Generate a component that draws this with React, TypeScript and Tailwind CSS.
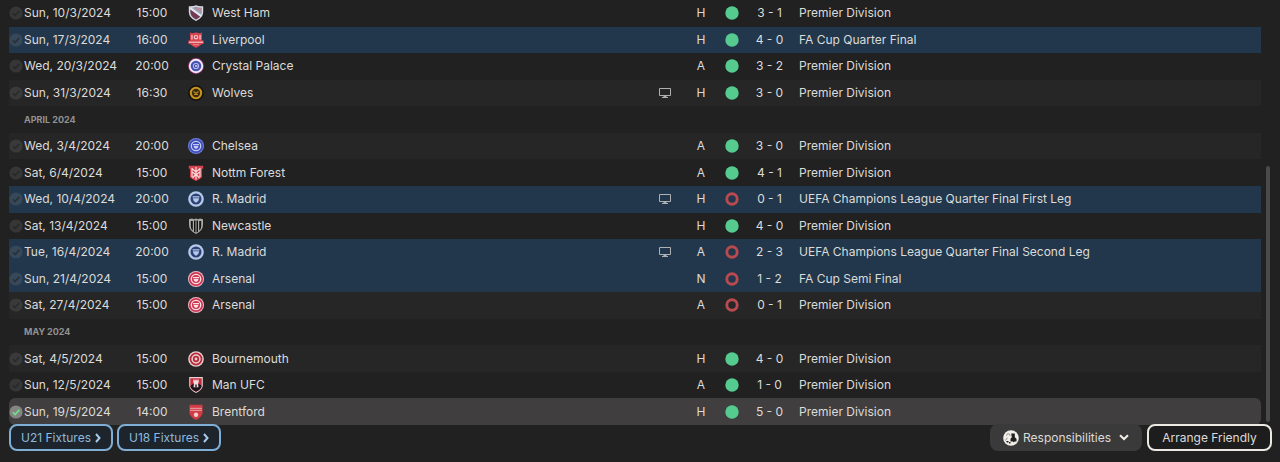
import type { ReactNode } from 'react';

type Result = 'win' | 'loss';

type Match = {
  date: string;
  time: string;
  team: string;
  tv?: boolean;
  venue: 'H' | 'A' | 'N';
  result: Result;
  score: string;
  competition: string;
  cup?: boolean;
  selected?: boolean;
};

type Row = Match | { month: string };

const LEAGUE = 'Premier Division';

const rows: Row[] = [
  { date: 'Sun, 10/3/2024', time: '15:00', team: 'West Ham', venue: 'H', result: 'win', score: '3 - 1', competition: LEAGUE },
  { date: 'Sun, 17/3/2024', time: '16:00', team: 'Liverpool', venue: 'H', result: 'win', score: '4 - 0', competition: 'FA Cup Quarter Final', cup: true },
  { date: 'Wed, 20/3/2024', time: '20:00', team: 'Crystal Palace', venue: 'A', result: 'win', score: '3 - 2', competition: LEAGUE },
  { date: 'Sun, 31/3/2024', time: '16:30', team: 'Wolves', tv: true, venue: 'H', result: 'win', score: '3 - 0', competition: LEAGUE },
  { month: 'APRIL 2024' },
  { date: 'Wed, 3/4/2024', time: '20:00', team: 'Chelsea', venue: 'A', result: 'win', score: '3 - 0', competition: LEAGUE },
  { date: 'Sat, 6/4/2024', time: '15:00', team: 'Nottm Forest', venue: 'A', result: 'win', score: '4 - 1', competition: LEAGUE },
  { date: 'Wed, 10/4/2024', time: '20:00', team: 'R. Madrid', tv: true, venue: 'H', result: 'loss', score: '0 - 1', competition: 'UEFA Champions League Quarter Final First Leg', cup: true },
  { date: 'Sat, 13/4/2024', time: '15:00', team: 'Newcastle', venue: 'H', result: 'win', score: '4 - 0', competition: LEAGUE },
  { date: 'Tue, 16/4/2024', time: '20:00', team: 'R. Madrid', tv: true, venue: 'A', result: 'loss', score: '2 - 3', competition: 'UEFA Champions League Quarter Final Second Leg', cup: true },
  { date: 'Sun, 21/4/2024', time: '15:00', team: 'Arsenal', venue: 'N', result: 'loss', score: '1 - 2', competition: 'FA Cup Semi Final', cup: true },
  { date: 'Sat, 27/4/2024', time: '15:00', team: 'Arsenal', venue: 'A', result: 'loss', score: '0 - 1', competition: LEAGUE },
  { month: 'MAY 2024' },
  { date: 'Sat, 4/5/2024', time: '15:00', team: 'Bournemouth', venue: 'H', result: 'win', score: '4 - 0', competition: LEAGUE },
  { date: 'Sun, 12/5/2024', time: '15:00', team: 'Man UFC', venue: 'A', result: 'win', score: '1 - 0', competition: LEAGUE },
  { date: 'Sun, 19/5/2024', time: '14:00', team: 'Brentford', venue: 'H', result: 'win', score: '5 - 0', competition: LEAGUE, selected: true },
];

const SHIELD = 'M.8 1.200 Q5 1.500 8 .3 Q11 1.500 15.200 1.200 V7 Q15 13 8 16 Q1 13 .8 7Z';

function RoundelCup({ base, rim, mark }: { base: string; rim: string; mark: string }) {
  return (
    <>
      <circle cx="8" cy="8" r="8" fill={rim} />
      <circle cx="8" cy="8" r="7.100" fill={base} />
      <circle cx="8" cy="8" r="4.700" fill="none" stroke={mark} strokeWidth="1.300" />
      <path d="M5 6h6v1.200H5z M5.500 7.900h5q-.3 2.400-2.500 3.200Q5.800 10.300 5.500 7.900z" fill={mark} />
    </>
  );
}

const crests: Record<string, ReactNode> = {
  'West Ham': (
    <>
      <path d={SHIELD} fill="#d6dbe6" />
      <path d="M2.300 2.800 Q6 3 8 1.800 Q10 3 13.700 2.800 V7 Q13.500 12 8 14.500 Q2.500 12 2.300 7Z" fill="#8fb0c9" />
      <path d="M2.300 4.500 12.300 11.500 Q11 13 8 14.500 Q2.500 12 2.300 7Z" fill="#74384f" />
      <path d="M5 2.700 13.500 8.500 13.700 2.800 Q10 3 8 1.800Z" fill="#b68f9f" />
      <path d="M2.500 3.200 13 11" stroke="#e8e9f0" strokeWidth="1.900" />
    </>
  ),
  Liverpool: (
    <>
      <path d="M2 .5 4 1.200 8 .5l4 .7 2-.7v8h1.700v3.500H14Q12 14 8 16 4 14 2 12H.3V8.500H2z" fill="#d9424f" />
      <path d="M3.300 3h1.300v4.500H3.300zM11.400 3h1.300v4.500h-1.300z" fill="#f3c9cb" />
      <circle cx="8" cy="5.200" r="1.700" fill="none" stroke="#f3c9cb" strokeWidth="1.200" />
      <path d="M1 10.200h14" stroke="#f3c9cb" strokeWidth="1.200" />
      <path d="M5 12.700h6" stroke="#e88b93" strokeWidth="1" />
    </>
  ),
  'Crystal Palace': (
    <>
      <circle cx="8" cy="8" r="7.900" fill="#a63a73" />
      <circle cx="8" cy="8" r="7.200" fill="#eeeafa" />
      <circle cx="8" cy="8" r="5.300" fill="#4652b4" />
      <circle cx="8" cy="8" r="3.100" fill="#b9bee9" />
      <circle cx="8" cy="8" r="2.100" fill="#3a469f" />
      <path d="M7 7.300h2.500v1.400H7z" fill="#e5e5f8" />
    </>
  ),
  Wolves: (
    <>
      <circle cx="8" cy="8" r="7.900" fill="#17130c" />
      <circle cx="8" cy="8" r="5.200" fill="#3a2c0c" stroke="#c8961f" strokeWidth="2" />
      <path d="M5.500 6.500 8 8.500l2.500-2M6 9.500h4M8 8.500V10" stroke="#b98a20" strokeWidth="1.200" fill="none" />
    </>
  ),
  Chelsea: <RoundelCup base="#3f4fbc" rim="#7380dc" mark="#c3cbf5" />,
  'Nottm Forest': (
    <>
      <path d="M.8.800h14.400v3H14v8.500Q12 14.500 8 16 4 14.500 2 12.300V3.800H.8z" fill="#d84350" />
      <path d="M8 2v12.500M4 3.500 8 7l4-3.500M4 7l4 2.500L12 7M4.500 13 8 9l3.500 4M4 3v9M12 3v9" stroke="#f6d9d9" strokeWidth="1.200" fill="none" />
    </>
  ),
  'R. Madrid': (
    <>
      <circle cx="8" cy="8" r="7.800" fill="#b7c8ea" />
      <circle cx="8" cy="8" r="5.500" fill="#2c4275" />
      <path d="M4.600 5.300h6.800v1.300H4.600zM4.800 7.300h6.400Q11 10.300 8 11.800 5 10.300 4.800 7.300z" fill="#b7c8ea" />
    </>
  ),
  Newcastle: (
    <>
      <path d="M1 1.200 4 .5l2 .7 2-.7 2 .7 2-.7 3 .7V7Q14.700 13 8 16 1.300 13 1 7Z" fill="#a9a9a7" />
      <path d="M2.800 3h2v9.600Q2.800 11 2.800 8zM6 2.500h1.500v12L6 13.700zM8.500 2.500H10v11.200l-1.500.8zM11.200 3h2v5q0 3-2 4.600z" fill="#151515" />
    </>
  ),
  Arsenal: <RoundelCup base="#cf3654" rim="#f0bcc6" mark="#fbe1e0" />,
  Bournemouth: (
    <>
      <circle cx="8" cy="8" r="7.800" fill="#ecd0d0" />
      <circle cx="8" cy="8" r="6.400" fill="#b52b3a" />
      <circle cx="8" cy="8" r="3.900" fill="none" stroke="#ecd0d0" strokeWidth="1.500" />
      <circle cx="8" cy="8" r="1.400" fill="#ecd0d0" />
    </>
  ),
  'Man UFC': (
    <>
      <path d="M1.200 0h13.600V9Q14 13 8 16 2 13 1.200 9z" fill="#ead2d3" />
      <path d="M2.300 1.200h11.400V9Q13 12.500 8 14.800 3 12.500 2.300 9z" fill="#c62b3d" />
      <path d="M2.300 9 5 7h6l2.700 2Q13 12.500 8 14.800 3 12.500 2.300 9z" fill="#1d1217" />
      <path d="M5.300 2.500h1.200v1h.9v-1h1.200v1h.9v-1h1.200v3l-.7.700.5 4h-5l.5-4-.7-.7z" fill="#f0dcdc" />
      <path d="M7.300 7.500h1.400v2.700H7.300z" fill="#1d1217" />
    </>
  ),
  Brentford: (
    <>
      <path d="M1.500.8h13v9Q13 13.500 8 16 3 13.500 1.500 9.800z" fill="#d23a45" />
      <path d="M2 4.300h12M2 6.300h12" stroke="#eaa8a8" strokeWidth="1" />
      <circle cx="8" cy="10.700" r="2.200" fill="#f3cccc" />
    </>
  ),
};

function Crest({ team }: { team: string }) {
  return (
    <svg viewBox="0 0 16 16" className="mx-auto block size-4" aria-hidden="true">
      {crests[team]}
    </svg>
  );
}

function StatusTick({ active }: { active?: boolean }) {
  return (
    <svg viewBox="0 0 14 14" className="block size-[14px]" aria-hidden="true">
      <circle cx="7" cy="7" r="6.600" fill={active ? '#858483' : '#8a8a8a'} fillOpacity={active ? 1 : 0.2} />
      <path
        d="M3.800 7.300 6 9.500l4.300-4.600"
        fill="none"
        stroke={active ? '#6be487' : '#1c1f22'}
        strokeOpacity={active ? 1 : 0.55}
        strokeWidth="1.600"
      />
    </svg>
  );
}

function TvIcon() {
  return (
    <svg viewBox="0 0 12 10" className="mx-auto block h-[10px] w-3" aria-hidden="true">
      <path d="M.5.5h11v7H.5z" fill="none" stroke="#aeb0b2" />
      <path d="M4.500 8h3v1H9v1H3V9h1.500z" fill="#aeb0b2" />
    </svg>
  );
}

function ResultDot({ result }: { result: Result }) {
  return (
    <svg viewBox="0 0 14 14" className="mx-auto block size-[14px]" role="img" aria-label={result}>
      {result === 'win' ? (
        <circle cx="7" cy="7" r="6.700" fill="#55cb90" />
      ) : (
        <circle cx="7" cy="7" r="5.200" fill="none" stroke="#b94a50" strokeWidth="2.900" />
      )}
    </svg>
  );
}

function rowColour(match: Match, index: number) {
  if (match.selected) return 'bg-[#403e3e]';
  if (match.cup) return 'bg-[#22374c]';
  return index % 2 === 1 ? 'bg-[#262627]' : '';
}

function FixtureRow({ match, index }: { match: Match; index: number }) {
  const left = match.selected ? 'rounded-l-md' : '';
  const right = match.selected ? 'rounded-r-md' : '';
  const bg = rowColour(match, index);
  return (
    <tr>
      <td className={`${bg} ${left}`}><StatusTick active={match.selected} /></td>
      <td className={bg}>{match.date}</td>
      <td className={`${bg} text-center`}>{match.time}</td>
      <td className={bg}><Crest team={match.team} /></td>
      <td className={`${bg} pl-1`}>{match.team}</td>
      <td className={bg}>{match.tv && <TvIcon />}</td>
      <td className={`${bg} text-center`}>{match.venue}</td>
      <td className={bg}><ResultDot result={match.result} /></td>
      <td className={`${bg} text-center`}>{match.score}</td>
      <td className={`${bg} ${right}`}>{match.competition}</td>
    </tr>
  );
}

function FixtureButton({ children }: { children: ReactNode }) {
  return (
    <button
      type="button"
      className="flex h-[27px] w-[104px] items-center justify-center gap-1 rounded-lg border-2 border-[#7fafd6] bg-[#1d242c] text-[#8fb9dc]"
    >
      {children}
      <svg viewBox="0 0 6 10" className="h-[10px] w-[6px]" aria-hidden="true">
        <path d="M1 1l3.500 4L1 9" fill="none" stroke="#a5cbe8" strokeWidth="2" />
      </svg>
    </button>
  );
}

export default function App() {
  return (
    <main className="flex h-screen flex-col bg-[#212122] font-['Inter',sans-serif] text-[12px] leading-4 text-[#dcdbd9]">
      <div className="flex min-h-0 flex-1 pl-[9px]">
        <table className="h-full flex-1 table-fixed border-separate border-spacing-0 whitespace-nowrap">
          <colgroup>
            <col className="w-[15px]" />
            <col className="w-[96px]" />
            <col className="w-[64px]" />
            <col className="w-[24px]" />
            <col className="w-[444px]" />
            <col className="w-[26px]" />
            <col className="w-[46px]" />
            <col className="w-[16px]" />
            <col className="w-[59px]" />
            <col />
          </colgroup>
          <tbody>
            {rows.map((row, i) =>
              'month' in row ? (
                <tr key={row.month}>
                  <td />
                  <th colSpan={9} scope="colgroup" className="text-left text-[9px] font-bold text-[#929292]">
                    {row.month}
                  </th>
                </tr>
              ) : (
                <FixtureRow key={row.date} match={row} index={i} />
              ),
            )}
          </tbody>
        </table>
        <div className="grid w-[19px] grid-rows-[166fr_256fr_3fr] justify-start pl-[5px]">
          <div className="row-start-2 w-[4px] rounded-full bg-[#4b4b4b]" />
        </div>
      </div>
      <footer className="-mt-px flex items-start justify-between pr-2 pb-[11px] pl-[9px]">
        <nav className="flex gap-1">
          <FixtureButton>U21 Fixtures</FixtureButton>
          <FixtureButton>U18 Fixtures</FixtureButton>
        </nav>
        <div className="flex gap-[5px]">
          <button type="button" className="flex h-[27px] w-[152px] items-center justify-center gap-1 rounded-lg bg-[#3b3a3a]">
            <svg viewBox="0 0 16 16" className="size-4" aria-hidden="true">
              <circle cx="8" cy="8" r="7.800" fill="#f2efe8" />
              <path d="M8.200 3.500h3.600v3.800l1.700 1.400v2.800h-2l-.8 1-.8-1H7.500V8.700l1.300-1.200z" fill="#1f1f1f" />
              <path d="M3.500 5.500q.3-1.800 1.900-1.800T7 5.800M2.700 10.500q.3-2 2-2.500" stroke="#8b8985" strokeWidth="1" fill="none" />
              <path d="M3 11h2.500v1.500H4zM6 12h1.500v1.500H6z" fill="#1f1f1f" />
            </svg>
            Responsibilities
            <svg viewBox="0 0 10 7" className="ml-1 h-[7px] w-[10px]" aria-hidden="true">
              <path d="M1 1.200l4 3.800 4-3.800" fill="none" stroke="#f2efe8" strokeWidth="2" />
            </svg>
          </button>
          <button type="button" className="h-[27px] w-[125px] rounded-lg border-2 border-[#ece8e2] bg-[#1d1d1e]">
            Arrange Friendly
          </button>
        </div>
      </footer>
    </main>
  );
}
